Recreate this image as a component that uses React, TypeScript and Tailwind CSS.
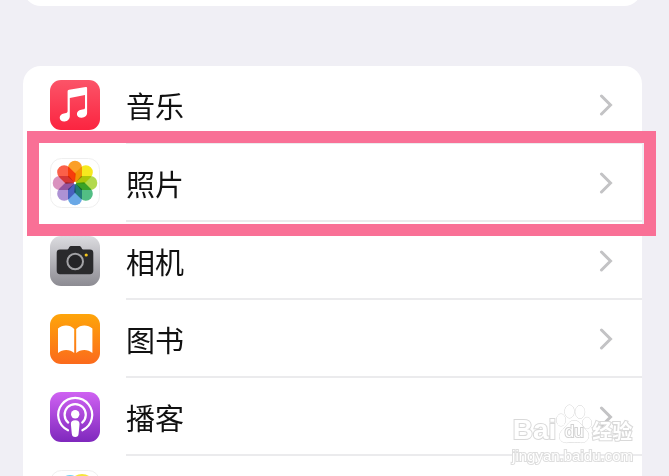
import type { ReactNode } from "react";

const PETALS = ["#fb9f26", "#f6e91e", "#b2d94c", "#52be84", "#6aa8e6", "#ad92d4", "#da92be", "#fb6048"];

function Tile({ children }: { children: ReactNode }) {
  return (
    <svg viewBox="0 0 50 50" className="size-[50px] shrink-0" aria-hidden="true">
      <defs>
        <linearGradient id="music" x1="0" y1="0" x2="0" y2="1">
          <stop offset="0" stopColor="#fb5468" />
          <stop offset="1" stopColor="#fb2440" />
        </linearGradient>
        <linearGradient id="camera" x1="0" y1="0" x2="0" y2="1">
          <stop offset="0" stopColor="#dcdce0" />
          <stop offset="1" stopColor="#8c8b92" />
        </linearGradient>
        <linearGradient id="books" x1="0" y1="0" x2="0" y2="1">
          <stop offset="0" stopColor="#fea50a" />
          <stop offset="1" stopColor="#fb6a1c" />
        </linearGradient>
        <linearGradient id="podcasts" x1="0" y1="0" x2="0" y2="1">
          <stop offset="0" stopColor="#cf62f2" />
          <stop offset="1" stopColor="#7f28bd" />
        </linearGradient>
      </defs>
      {children}
    </svg>
  );
}

function MusicIcon() {
  return (
    <Tile>
      <rect width="50" height="50" rx="11" fill="url(#music)" />
      <path
        d="M17.600 11.500c0-1 .5-1.500 1.500-1.700L35.700 7c.9-.1 1.400.3 1.400 1.200v24.600c0 2.800-2.200 4.700-5.300 4.900-2.800.2-4.900-1.300-4.900-3.700 0-2.300 1.700-3.900 4.300-4.300l2.300-.4c1-.2 1.500-.8 1.500-1.900V15.100l-15.200 2.800v18.300c0 2.900-2.200 5-5.200 5.200-2.800.2-4.900-1.300-4.900-3.700 0-2.300 1.700-3.900 4.200-4.300l2.200-.4c1-.2 1.500-.8 1.500-1.900z"
        fill="#fff"
      />
    </Tile>
  );
}

function PhotosIcon() {
  return (
    <Tile>
      <rect x="0.5" y="0.5" width="49" height="49" rx="11" fill="#fff" stroke="#efefef" />
      <g className="isolate">
        {PETALS.map((color, i) => (
          <path
            key={color}
            d="M18 9.700a7 7 0 0 1 14 0v9.300L26 24h-2L18 19z"
            fill={color}
            transform={`rotate(${i * 45} 25 25)`}
            className="mix-blend-multiply"
          />
        ))}
      </g>
      <circle cx="25" cy="25" r="1.200" fill="#fff" />
    </Tile>
  );
}

function CameraIcon() {
  return (
    <Tile>
      <rect width="50" height="50" rx="11" fill="url(#camera)" />
      <path
        d="M10 13.500h6.500c1.200 0 1.800-.5 2.300-1.600.6-1.500 1.400-2 2.800-2h7.200c1.400 0 2.200.5 2.800 2 .5 1.100 1.100 1.600 2.300 1.600H40c2.200 0 3.300 1.200 3.300 3.300v18c0 2.200-1.100 3.400-3.300 3.400H10c-2.200 0-3.300-1.200-3.300-3.400v-18c0-2.100 1.100-3.300 3.300-3.300z"
        fill="#2a2a2c"
      />
      <circle cx="25.200" cy="25.500" r="7.800" fill="#242426" stroke="#a3a3a6" strokeWidth="2" />
      <circle cx="36.200" cy="19" r="1.600" fill="#f4c51c" />
    </Tile>
  );
}

function BooksIcon() {
  return (
    <Tile>
      <rect width="50" height="50" rx="11" fill="url(#books)" />
      <path
        d="M8 14.500c4.500-4 12-4 16.200.5v24c-4-4-11.700-4.300-16.200 0zM42.400 14.500c-4.500-4-12-4-16.200.5v24c4-4 11.700-4.300 16.200 0z"
        fill="#fff"
      />
    </Tile>
  );
}

function PodcastsIcon() {
  return (
    <Tile>
      <rect width="50" height="50" rx="11" fill="url(#podcasts)" />
      <g fill="none" stroke="#fff" strokeWidth="2.200" strokeLinecap="round">
        <path d="M18 38.300a17 17 0 1 1 14.400 0" />
        <path d="M18.200 30.600a10.600 10.600 0 1 1 14 0" />
      </g>
      <circle cx="25.200" cy="22.200" r="4.200" fill="#fff" />
      <path
        d="M25.200 28.200c3 0 4.500 1.300 4.300 4l-.9 9.500c-.2 2.200-1.300 3.300-3.400 3.300s-3.200-1.100-3.400-3.300l-.9-9.500c-.2-2.700 1.300-4 4.300-4z"
        fill="#fff"
      />
    </Tile>
  );
}

function GameCenterIcon() {
  return (
    <Tile>
      <rect x="0.5" y="0.5" width="49" height="49" rx="11" fill="#fff" stroke="#efefef" />
      <circle cx="20" cy="15" r="10" fill="#6fd3f2" />
      <circle cx="32" cy="17" r="13" fill="#f6e63c" />
      <circle cx="17" cy="32" r="11" fill="#f25aa5" />
      <circle cx="34" cy="34" r="10" fill="#7ed957" />
    </Tile>
  );
}

function Chevron() {
  return (
    <svg viewBox="0 0 14 22" className="h-[22px] w-[14px]" fill="none" stroke="#c3c3c5" strokeWidth="3" aria-hidden="true">
      <path d="M2.500 2 11.500 11 2.500 20" strokeLinecap="round" strokeLinejoin="miter" />
    </svg>
  );
}

const apps = [
  { name: "音乐", icon: <MusicIcon /> },
  { name: "照片", icon: <PhotosIcon />, highlighted: true },
  { name: "相机", icon: <CameraIcon /> },
  { name: "图书", icon: <BooksIcon /> },
  { name: "播客", icon: <PodcastsIcon /> },
];

function Watermark() {
  return (
    <div className="pointer-events-none absolute right-9 bottom-3 flex flex-col items-center gap-1 font-['Liberation_Sans','Noto_Sans_CJK_SC',sans-serif] font-bold text-white [-webkit-text-stroke:2px_#d9d9d9] [paint-order:stroke_fill]">
      <div className="flex h-11 items-end">
        <span className="text-[28px] leading-7">Bai</span>
        <span className="relative flex h-10 w-9 items-end justify-center">
          <svg viewBox="0 0 36 40" className="absolute inset-0 size-full" fill="#fff" stroke="#d6d6d6" aria-hidden="true">
            <ellipse cx="5" cy="16" rx="4.500" ry="6" />
            <ellipse cx="13.500" cy="7.500" rx="4.700" ry="6.500" />
            <ellipse cx="24" cy="8" rx="4.700" ry="6.500" />
            <ellipse cx="31" cy="19" rx="4.500" ry="5.700" />
            <path d="M18 16.500c5 0 7 4 10 7.500 3 3 5 5 4.500 8.500-.6 4.500-4 6.500-8 6-4-.6-8.500-.6-12.500 0-4.500.6-8.500-1.500-8.500-6 0-4 2.500-6 5-8.500 3-3 5-7.500 9.500-7.500z" />
          </svg>
          <span className="relative text-[17px] leading-6 font-normal [-webkit-text-stroke:2px_#d2d2d2]">du</span>
        </span>
        <span className="text-[20px] leading-6">经验</span>
      </div>
      <span className="text-[15px] leading-4 font-normal [-webkit-text-stroke:2px_#dedede]">jingyan.baidu.com</span>
    </div>
  );
}

export default function App() {
  return (
    <main className="relative h-screen overflow-hidden bg-[#f0eff5] pr-[27px] pl-[23px] font-['Noto_Sans_CJK_SC',sans-serif] text-[#111]">
      <div className="flex h-[6px] items-end overflow-hidden">
        <div className="h-12 flex-1 rounded-[18px] bg-white" />
      </div>

      <ul className="mt-[60px] rounded-t-[18px] bg-white pl-[27px]">
        {apps.map(({ name, icon, highlighted }) => (
          <li key={name} className="relative">
            <a href="#" className="flex h-[78px] items-center gap-[26px]">
              {icon}
              <span className="flex h-full flex-1 items-center justify-between border-b-2 border-[#ebebed] pt-0.5 pr-[29px]">
                <span className="text-[29px] leading-10">{name}</span>
                <Chevron />
              </span>
            </a>
            {highlighted && (
              <div className="pointer-events-none absolute -top-[13px] -right-[14px] -bottom-[14px] -left-[23px] z-10 border-12 border-[#f97096]" />
            )}
          </li>
        ))}
        <li className="flex h-[78px] items-center">
          <GameCenterIcon />
        </li>
      </ul>

      <Watermark />
    </main>
  );
}
